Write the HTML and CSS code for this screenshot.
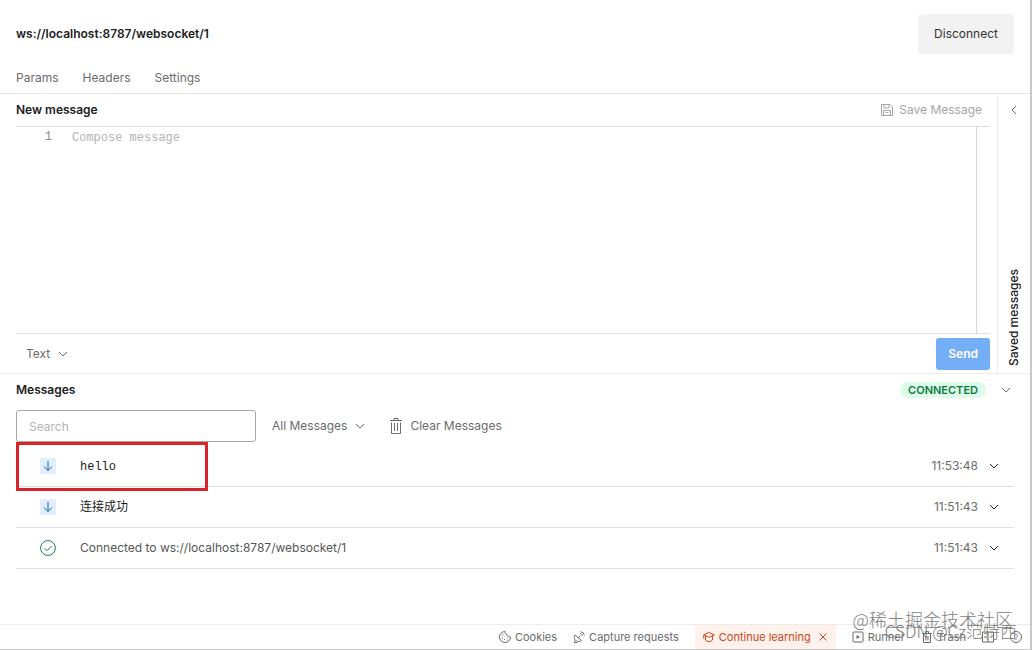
FILE: index.html
```html
<!DOCTYPE html>
<html lang="en">
<head>
<meta charset="utf-8">
<title>WebSocket request</title>
<link rel="stylesheet" href="styles.css">
</head>
<body>
<svg class="defs" aria-hidden="true">
  <symbol id="chevron" viewBox="0 0 10 6"><path d="M1 1l4 4 4-4"/></symbol>
  <symbol id="arrow-down" viewBox="0 0 16 16"><path d="M8 3v9.500M4 8.500l4 4 4-4"/></symbol>
</svg>
<div class="app">
  <header class="header">
    <div class="url-row">
      <h1 class="url">ws://localhost:8787/websocket/1</h1>
      <button class="disconnect" type="button">Disconnect</button>
    </div>
    <nav class="tabs">
      <button type="button">Params</button>
      <button type="button">Headers</button>
      <button type="button">Settings</button>
    </nav>
  </header>

  <section class="request">
    <div class="composer">
      <div class="composer-head">
        <h2><label for="message">New message</label></h2>
        <button class="save" type="button">
          <svg class="icon-12" viewBox="0 0 12 12"><path d="M.5.5h8.500l2.500 2.500v8.500H.5zM3 .5v3.500h5V.5M2.500 11.500v-5h7v5M4.500 8.500h3"/></svg>
          Save Message
        </button>
      </div>
      <div class="editor">
        <span class="line-number">1</span>
        <textarea id="message" placeholder="Compose message" spellcheck="false"></textarea>
        <span class="ruler"></span>
      </div>
      <div class="composer-foot">
        <button class="dropdown" type="button">Text <svg class="chevron"><use href="#chevron"/></svg></button>
        <button class="send" type="button">Send</button>
      </div>
    </div>
    <aside class="saved">
      <button type="button" aria-label="Expand saved messages"><svg class="chevron-left" viewBox="0 0 6 10"><path d="M5 1L1 5l4 4"/></svg></button>
      <span class="saved-label">Saved messages</span>
    </aside>
  </section>

  <section class="messages">
    <div class="messages-head">
      <h2>Messages</h2>
      <span class="status">CONNECTED</span>
      <button class="collapse" type="button" aria-label="Collapse messages"><svg class="chevron"><use href="#chevron"/></svg></button>
    </div>
    <div class="filters">
      <input class="search" type="search" placeholder="Search" aria-label="Search messages">
      <button class="dropdown" type="button">All Messages <svg class="chevron"><use href="#chevron"/></svg></button>
      <button class="clear" type="button">
        <svg class="trash" viewBox="0 0 12 16"><path d="M0 2.500h12M4 2V.5h4V2M1.500 4.500v11h9v-11M4.500 5v8M7.500 5v8"/></svg>
        Clear Messages
      </button>
    </div>
    <ul class="list">
      <li class="row highlighted">
        <svg class="received"><use href="#arrow-down"/></svg>
        <span class="body mono">hello</span>
        <time>11:53:48</time>
        <button type="button" aria-label="Expand"><svg class="chevron"><use href="#chevron"/></svg></button>
      </li>
      <li class="row">
        <svg class="received"><use href="#arrow-down"/></svg>
        <span class="body mono">连接成功</span>
        <time>11:51:43</time>
        <button type="button" aria-label="Expand"><svg class="chevron"><use href="#chevron"/></svg></button>
      </li>
      <li class="row">
        <svg class="success" viewBox="0 0 16 16"><circle cx="8" cy="8" r="7.400"/><path d="M4.500 8.200l2.500 2.500 4.700-4.700"/></svg>
        <span class="body">Connected to ws://localhost:8787/websocket/1</span>
        <time>11:51:43</time>
        <button type="button" aria-label="Expand"><svg class="chevron"><use href="#chevron"/></svg></button>
      </li>
    </ul>
  </section>

  <footer class="footer">
    <button class="cookies" type="button">
      <svg class="icon-12" viewBox="0 0 12 12"><path d="M6 .5a5.500 5.500 0 1 0 5.500 5.500c-1 .3-1.900-.2-2-1.200-1.400.2-2.200-.7-1.900-1.900C6.400 2.700 5.700 1.700 6 .5z"/><path d="M3 5h1M5 8.500h1M7.500 7h1M4 2.800v.8M3 7.500h.8M8 9.200h.6M5.500 5.500h.6"/></svg>
      Cookies
    </button>
    <button class="capture" type="button">
      <svg class="icon-12" viewBox="0 0 12 12"><path d="M2 4c-1.500 2.500-.5 5 1.500 6 1.700.8 3.700.6 5-.5zM5.200 6.800l2-2M7.200 2.800a2 2 0 0 1 2 2M7.500.7a4 4 0 0 1 3.800 3.800M2 9.500l-.8 2h3"/></svg>
      Capture requests
    </button>
    <div class="learning">
      <button type="button">
        <svg class="icon-12" viewBox="0 0 12 12"><path d="M.7 4L6 1.500 11.300 4 6 6.300zM2.500 5v4c1.500 2 5.500 2 7 0V5M.7 4v3.500"/></svg>
        Continue learning
      </button>
      <button type="button" aria-label="Dismiss"><svg class="close" viewBox="0 0 8 8"><path d="M.5.5l7 7M7.500.5l-7 7"/></svg></button>
    </div>
    <button class="runner" type="button">
      <svg class="icon-12" viewBox="0 0 12 12"><rect x="1" y="1" width="10" height="10" rx="1"/><path class="solid" d="M4.500 4l3.500 2-3.500 2z"/></svg>
      Runner
    </button>
    <button class="bin" type="button">
      <svg class="icon-12" viewBox="0 0 12 12"><path d="M1 2.500h10M4.500 2V.5h3V2M2.500 3v8.500h7V3M5 5v4.500M7 5v4.500"/></svg>
      Trash
    </button>
    <button class="panes" type="button" aria-label="Two-pane view"><svg class="icon-12" viewBox="0 0 12 12"><path d="M.5 1h11v10H.5zM6 1v10M2 6h2.500M8 6h2"/></svg></button>
    <button class="help" type="button" aria-label="Help"><svg class="icon-12" viewBox="0 0 12 12"><circle cx="6" cy="6" r="5.500"/><path d="M4.500 4.800c0-2 3-2 3-.2C7.500 5.800 6 5.800 6 7.200M6 8.200v1"/></svg></button>
  </footer>
  <div class="watermark watermark-top">@稀土掘金技术社区</div>
  <div class="watermark watermark-bottom">CSDN @Cz范特西</div>
</div>
</body>
</html>
```

FILE: styles.css
```css
*, ::before, ::after { box-sizing: border-box; }

body {
  margin: 0;
  background: #fff;
  color: #6b6b6b;
  font: 12px/20px Inter, "Noto Sans CJK SC", sans-serif;
}

h1, h2 {
  margin: 0;
  color: #212121;
  font-size: 12px;
  font-weight: 600;
}

button {
  display: flex;
  align-items: center;
  padding: 0;
  border: 0;
  background: none;
  color: inherit;
  font: inherit;
  white-space: nowrap;
  cursor: pointer;
}

svg {
  flex: none;
  fill: none;
  stroke: currentColor;
}

.defs { position: absolute; width: 0; height: 0; }
.icon-12 { width: 12px; height: 12px; }
.chevron { width: 10px; height: 6px; }

.app {
  position: relative;
  display: flex;
  flex-direction: column;
  min-height: 100vh;
  border-right: 2px solid #c8c8c8;
  border-bottom: 1px solid #c8c8c8;
}

/* Header */
.header {
  padding: 14px 16px 0;
  border-bottom: 1px solid #e6e6e6;
}

.url-row {
  display: flex;
  align-items: center;
  justify-content: space-between;
}

.disconnect {
  height: 40px;
  padding: 0 16px;
  border-radius: 4px;
  background: #f2f2f2;
  color: #333;
}

.tabs {
  display: flex;
  gap: 24px;
  padding: 14px 0 5px;
}

/* Message composer */
.request {
  display: flex;
  height: 280px;
  border-bottom: 1px solid #ededed;
}

.composer {
  display: flex;
  flex: 1;
  flex-direction: column;
  padding: 0 7px 0 16px;
}

.composer-head {
  display: flex;
  align-items: center;
  justify-content: space-between;
  height: 32px;
  padding-right: 8px;
}

.save { gap: 6px; color: #a6a6a6; }

.editor {
  display: flex;
  flex: 1;
  border-top: 1px solid #e0e0e0;
  border-bottom: 1px solid #e0e0e0;
  font: 12px/20px "Liberation Mono", monospace;
}

.line-number {
  width: 36px;
  color: #8a8a8a;
  text-align: right;
}

textarea {
  flex: 1;
  padding: 1px 0 0 20px;
  border: 0;
  outline: 0;
  background: none;
  color: #212121;
  font: inherit;
  resize: none;
}

::placeholder { color: #b3b3b3; opacity: 1; }

.ruler { width: 14px; border-left: 1px solid #d6d6d6; }

.composer-foot {
  display: flex;
  align-items: center;
  justify-content: space-between;
  height: 39px;
  padding-left: 10px;
}

.dropdown { gap: 8px; }

.send {
  height: 32px;
  padding: 0 12px;
  border-radius: 3px;
  background: #74aef6;
  color: #fff;
  font-weight: 600;
}

.saved {
  display: flex;
  flex-direction: column;
  align-items: center;
  justify-content: space-between;
  width: 33px;
  padding: 11px 0 7px;
  border-left: 1px solid #ededed;
}

.chevron-left { width: 6px; height: 10px; }

.saved-label {
  color: #212121;
  font-weight: 500;
  writing-mode: vertical-rl;
  transform: rotate(180deg);
}

/* Messages */
.messages { flex: 1; padding: 0 16px; }

.messages-head {
  display: flex;
  align-items: center;
  height: 32px;
  padding-right: 3px;
}

.status {
  margin-left: auto;
  padding: 0 8px;
  border-radius: 8px;
  background: #dcfbe8;
  color: #107a42;
  font-size: 11px;
  font-weight: 600;
  line-height: 16px;
}

.collapse { margin-left: 15px; }

.filters {
  display: flex;
  align-items: center;
  padding: 4px 0;
}

.search {
  width: 240px;
  height: 32px;
  margin-right: 16px;
  padding: 0 12px;
  border: 1px solid #a6a6a6;
  border-radius: 3px;
  outline: 0;
  font: inherit;
}

.clear { gap: 8px; margin-left: 25px; }
.trash { width: 12px; height: 16px; }

.list { margin: 0; padding: 0; list-style: none; }

.row {
  position: relative;
  display: flex;
  align-items: center;
  height: 41px;
  padding: 0 15px 0 24px;
  border-bottom: 1px solid #e0e0e0;
}

.row button { margin-left: 11px; color: #212121; }

.received {
  width: 16px;
  height: 16px;
  background: #e0eeff;
  color: #1460bd;
}

.success { width: 16px; height: 16px; color: #108348; }
.body { flex: 1; margin-left: 24px; color: #555; }

.mono {
  padding-top: 2px;
  color: #212121;
  font: 12px/20px "Liberation Mono", "Noto Sans CJK SC", monospace;
}

.highlighted::after {
  content: "";
  position: absolute;
  top: -4px;
  left: 0;
  width: 192px;
  height: 49px;
  border: 3px solid #d8232a;
}

/* Status bar */
.footer {
  display: flex;
  align-items: center;
  justify-content: flex-end;
  height: 25px;
  padding-right: 8px;
  border-top: 1px solid #ededed;
  font-size: 11px;
}

.footer button { gap: 4px; }
.footer .capture { margin-left: 16px; }

.learning {
  display: flex;
  gap: 8px;
  height: 100%;
  margin: 0 16px;
  padding: 0 9px 0 8px;
  background: #fff1eb;
  color: #c8491f;
}

.close { width: 8px; height: 8px; }
.footer .bin, .footer .panes, .footer .help { margin-left: 16px; }
.solid { fill: currentColor; stroke: none; }

.watermark {
  position: absolute;
  color: #808080;
  font-family: "Noto Sans CJK SC", sans-serif;
  font-weight: 300;
  white-space: nowrap;
  pointer-events: none;
}

.watermark-top { right: 17px; bottom: 20px; font-size: 18px; }
.watermark-bottom { right: 13px; bottom: 8px; font-size: 17px; }
```
